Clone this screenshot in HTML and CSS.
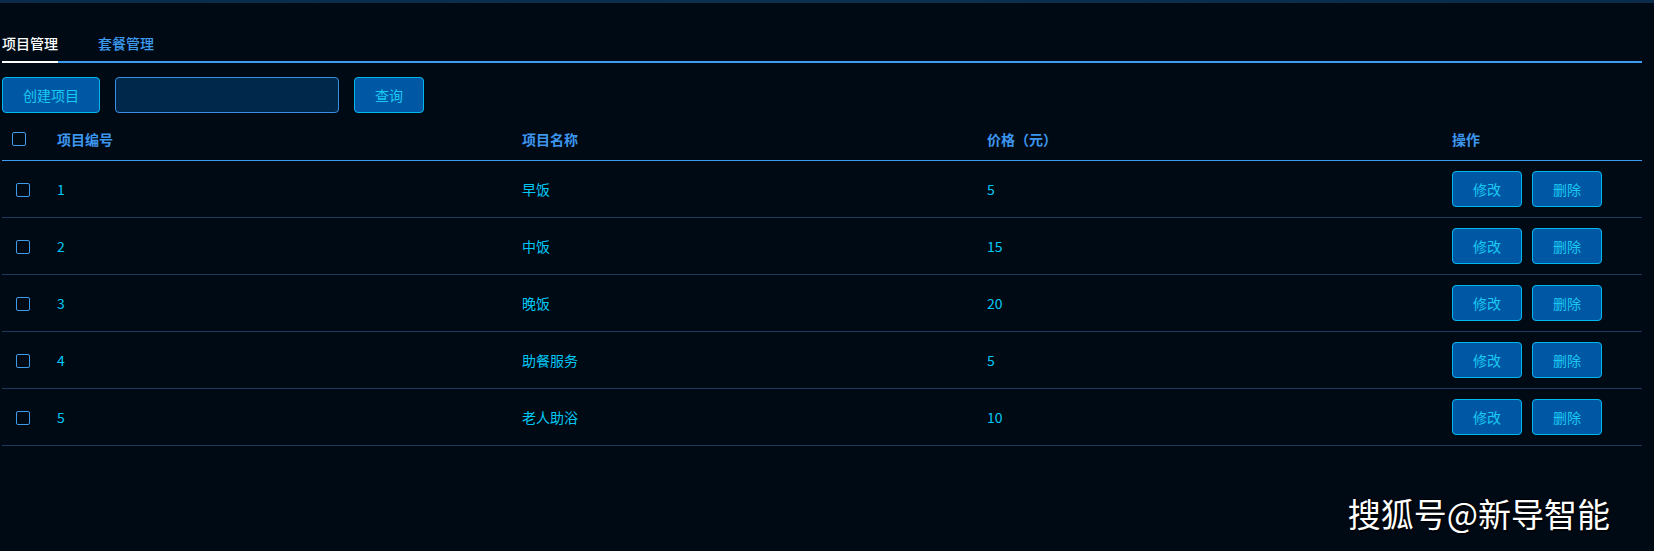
FILE: index.html
```html
<!DOCTYPE html>
<html>
<head>
	<meta charset="utf-8">
	<title>项目管理</title>
	<link rel="stylesheet" href="styles.css">
</head>
<body>
	<div class="topbar"></div>
	<div class="page">
		<div class="tabs">
			<div class="tab active">项目管理</div>
			<div class="tab">套餐管理</div>
		</div>

		<div class="toolbar">
			<button class="btn btn-create">创建项目</button>
			<input class="search" type="text">
			<button class="btn btn-query">查询</button>
		</div>

		<div class="table">
			<div class="row head">
				<div class="cell check"><span class="box"></span></div>
				<div class="cell">项目编号</div>
				<div class="cell">项目名称</div>
				<div class="cell">价格（元）</div>
				<div class="cell">操作</div>
			</div>
			<div id="rows"></div>
		</div>
	</div>

	<div class="watermark">搜狐号@新导智能</div>

	<script>
		var items = [
			{ id: 1, name: '早饭', price: 5 },
			{ id: 2, name: '中饭', price: 15 },
			{ id: 3, name: '晚饭', price: 20 },
			{ id: 4, name: '助餐服务', price: 5 },
			{ id: 5, name: '老人助浴', price: 10 }
		];

		var rows = document.getElementById('rows');
		items.forEach(function (item) {
			var row = document.createElement('div');
			row.className = 'row';
			row.innerHTML =
				'<div class="cell check"><span class="box"></span></div>' +
				'<div class="cell">' + item.id + '</div>' +
				'<div class="cell">' + item.name + '</div>' +
				'<div class="cell">' + item.price + '</div>' +
				'<div class="cell ops"><button class="btn btn-op">修改</button><button class="btn btn-op">删除</button></div>';
			rows.appendChild(row);
		});
	</script>
</body>
</html>
```

FILE: styles.css
```css
body {
	margin: 0;
	padding: 0;
	background-color: #000a15;
	font-family: "Noto Sans CJK SC", "Noto Sans", sans-serif;
	font-size: 14px;
	color: #00c8f4;
	height: 551px;
	overflow: hidden;
	position: relative;
}

.topbar {
	height: 3px;
	background: linear-gradient(to right, #0a2b4a, #0c3050 50%, #0a2b4a);
}

.page {
	padding: 0 12px 0 2px;
}

.tabs {
	display: flex;
	gap: 40px;
	margin-top: 19px;
	height: 39px;
	border-bottom: 2px solid #3d9bf0;
}

.tab {
	padding-top: 4px;
	line-height: 35px;
	color: #3d9bf0;
	position: relative;
	font-weight: 500;
}

.tab.active {
	color: #ffffff;
}

.tab.active::after {
	content: "";
	position: absolute;
	left: 0;
	right: 0;
	bottom: -2px;
	height: 2px;
	background-color: #ffffff;
}

.toolbar {
	display: flex;
	gap: 15px;
	margin-top: 14px;
	height: 36px;
}

.btn {
	font-family: "Noto Sans CJK SC", "Noto Sans", sans-serif;
	font-size: 14px;
	color: #1ac8f4;
	background-color: #0058a4;
	border: 1px solid #00b8ee;
	border-radius: 4px;
	height: 36px;
	padding: 0;
	cursor: pointer;
}

.btn-create {
	width: 98px;
}

.btn-query {
	width: 70px;
}

.search {
	width: 224px;
	height: 36px;
	box-sizing: border-box;
	background-color: #00284b;
	border: 1px solid #3a8fe2;
	border-radius: 4px;
	color: #17c4f0;
	outline: none;
}

.table {
	margin-top: 5px;
}

.row {
	display: grid;
	grid-template-columns: 45px 465px 465px 465px 1fr;
	height: 56px;
	align-items: center;
	border-bottom: 1px solid #1c3b5c;
}

.row.head {
	height: 42px;
	color: #3d96ee;
	font-weight: bold;
	border-bottom: 1px solid #3d9bf0;
}

.cell {
	padding-left: 10px;
}

.check {
	padding-left: 14px;
	padding-top: 2px;
	display: flex;
}

.head .check {
	padding-left: 10px;
	padding-top: 0;
}

.box {
	width: 14px;
	height: 14px;
	box-sizing: border-box;
	border: 1.5px solid #3d9be9;
	border-radius: 2px;
}

.ops {
	display: flex;
	gap: 10px;
}

.btn-op {
	width: 70px;
}

.watermark {
	position: absolute;
	right: 44px;
	top: 490px;
	font-size: 33px;
	line-height: 46px;
	color: #ffffff;
	text-shadow: 1px 1px 2px #000000, 0 0 3px #000000;
}
```
